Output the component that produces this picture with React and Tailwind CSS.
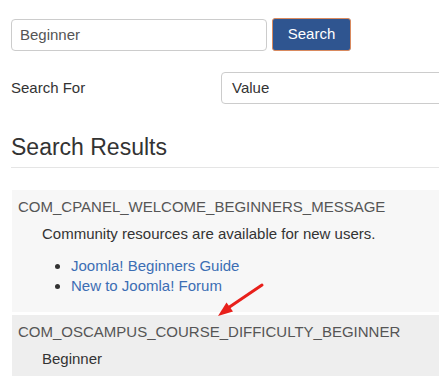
import React from 'react';

const App = () => {
  return (
    <div className="relative h-[383px] w-[439px] overflow-hidden bg-white font-['Liberation_Sans',Arial,sans-serif] text-[15px] text-[#333]">
      {/* Search form */}
      <div className="flex items-center gap-[5px] pl-[11px] pt-[18px]">
        <input
          type="text"
          defaultValue="Beginner"
          className="h-[32px] w-[256px] rounded-[4px] border border-[#ccc] px-[8px] text-[15px] text-[#555] outline-none"
        />
        <button className="h-[33px] w-[79px] rounded-[3px] border border-[#d98a5f] bg-[#2f5590] text-[15px] text-white">
          Search
        </button>
      </div>

      <div className="mt-[21px] flex items-center pl-[11px]">
        <label className="w-[210px] shrink-0">Search For</label>
        <div className="flex h-[32px] w-[260px] shrink-0 items-center rounded-[4px] border border-[#ccc] px-[10px] text-[#333]">
          Value
        </div>
      </div>

      {/* Results */}
      <h2 className="mt-[29px] pl-[11px] text-[23px] leading-[28px] text-[#333]">Search Results</h2>
      <div className="ml-[11px] mt-[6px] h-px bg-[#e5e5e5]" />

      <div className="ml-[12px] mt-[22px] bg-[#f7f7f7] pb-[7px] pt-[7px] leading-[20px]">
        <div className="pl-[6px] text-[#555]">COM_CPANEL_WELCOME_BEGINNERS_MESSAGE</div>
        <p className="mt-[7px] pl-[30px]">Community resources are available for new users.</p>
        <ul className="mb-[9px] mt-[12px] list-disc pl-[59px] text-[#3c6eb4] marker:text-[#333]">
          <li>Joomla! Beginners Guide</li>
          <li>New to Joomla! Forum</li>
        </ul>
      </div>

      <div className="ml-[12px] mt-[3px] bg-[#eeeeee] pb-[7px] pt-[7px] leading-[20px]">
        <div className="pl-[6px] text-[#555]">COM_OSCAMPUS_COURSE_DIFFICULTY_BEGINNER</div>
        <p className="mt-[7px] pl-[30px]">Beginner</p>
      </div>

      {/* annotation arrow */}
      <svg className="pointer-events-none absolute left-0 top-0" width="439" height="383">
        <line x1="262" y1="285" x2="228" y2="308" stroke="#e8201b" strokeWidth="3" strokeLinecap="round" />
        <polygon points="218,316 226.5,302.5 233,311.5" fill="#e8201b" />
      </svg>
    </div>
  );
};

export default App;
